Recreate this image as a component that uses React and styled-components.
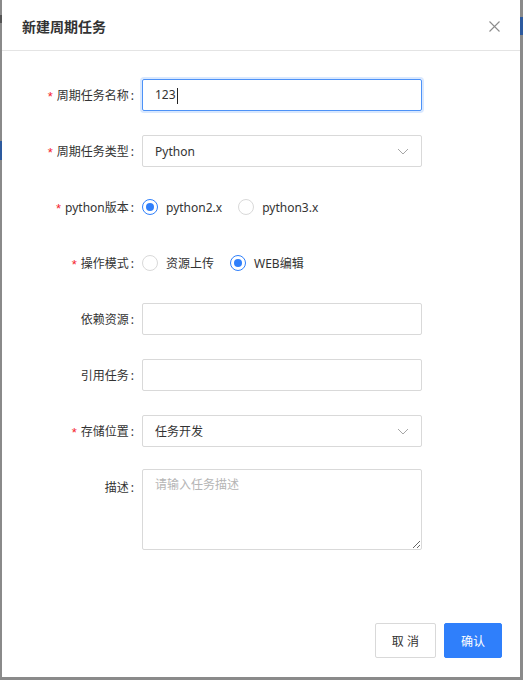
import React from "react";
import styled, { createGlobalStyle } from "styled-components";

const GlobalStyle = createGlobalStyle`
  html, body {
    margin: 0;
    padding: 0;
  }
  body {
    font-family: "Noto Sans", "Noto Sans CJK SC", sans-serif;
    font-size: 12px;
    color: #333;
  }
`;

const blue = "#2f7ffb";

const Backdrop = styled.div`
  width: 523px;
  height: 680px;
  padding-left: 2px;
  box-sizing: border-box;
  background:
    linear-gradient(#2d5a9e, #2d5a9e) 0 141px / 2px 19px no-repeat,
    linear-gradient(#555, #555) 0 15px / 2px 8px no-repeat,
    linear-gradient(#2d5a9e, #2d5a9e) 520px 17px / 3px 18px no-repeat,
    #8a8a8a;
`;

const Modal = styled.div`
  width: 518px;
  height: 677px;
  background: #fff;
  display: flex;
  flex-direction: column;
`;

const Header = styled.div`
  height: 51px;
  display: flex;
  align-items: center;
  justify-content: space-between;
  padding: 2px 18px 0 20px;
  box-sizing: border-box;
  border-bottom: 1px solid #e4e4e4;
`;

const Title = styled.h2`
  margin: 0;
  font-size: 14px;
  font-weight: bold;
  color: #333;
`;

const Close = styled.button`
  border: none;
  background: none;
  padding: 0;
  width: 16px;
  height: 16px;
  display: flex;
  align-items: center;
  justify-content: center;
  cursor: pointer;
`;

const Form = styled.div`
  padding-top: 28px;
  display: flex;
  flex-direction: column;
  gap: 24px;
`;

const Row = styled.div`
  display: flex;
  align-items: ${(p) => (p.$top ? "flex-start" : "center")};
  min-height: 32px;
`;

const Label = styled.label`
  width: 140px;
  flex-shrink: 0;
  display: flex;
  justify-content: flex-end;
  align-items: center;
  height: 32px;
  font-size: 12px;
  color: #333;
  white-space: nowrap;
`;

const Star = styled.span`
  color: #f5222d;
  margin-right: 4px;
  font-family: "Liberation Sans", sans-serif;
  font-size: 13px;
  line-height: 1;
  position: relative;
  top: 1px;
`;

const Colon = styled.span`
  margin: 0 8px 0 2px;
`;

const Field = styled.div`
  width: 280px;
  height: 32px;
  box-sizing: border-box;
  border: 1px solid ${(p) => (p.$focus ? "#4d92f7" : "#d9d9d9")};
  box-shadow: ${(p) => (p.$focus ? "0 0 0 2px rgba(47,127,251,0.18)" : "none")};
  border-radius: 2px;
  padding: 0 12px;
  display: flex;
  align-items: center;
  justify-content: space-between;
  font-size: 12px;
  color: #333;
`;

const TextInput = styled.input`
  width: 280px;
  height: 32px;
  box-sizing: border-box;
  border: 1px solid #d9d9d9;
  border-radius: 2px;
  padding: 0 12px;
  font: inherit;
  outline: none;
`;

const Caret = styled.span`
  display: inline-block;
  width: 1px;
  height: 16px;
  background: #222;
  vertical-align: middle;
  margin-left: 1px;
`;

const TextArea = styled.textarea`
  width: 280px;
  height: 81px;
  box-sizing: border-box;
  border: 1px solid #d9d9d9;
  border-radius: 2px;
  padding: 6px 12px;
  font: inherit;
  line-height: 1.5;
  color: #333;
  margin-top: -2px;
  outline: none;
  &::placeholder {
    color: #b5b5b5;
  }
`;

const RadioGroup = styled.div`
  display: flex;
  align-items: center;
`;

const RadioItem = styled.label`
  display: flex;
  align-items: center;
  margin-right: 8px;
  font-size: 12px;
  color: #333;
  cursor: pointer;
`;

const Dot = styled.span`
  width: 16px;
  height: 16px;
  box-sizing: border-box;
  border-radius: 50%;
  border: 1px solid ${(p) => (p.$on ? blue : "#d9d9d9")};
  display: flex;
  align-items: center;
  justify-content: center;
  &::after {
    content: "";
    width: 8px;
    height: 8px;
    border-radius: 50%;
    background: ${blue};
    display: ${(p) => (p.$on ? "block" : "none")};
  }
`;

const RadioText = styled.span`
  padding: 0 8px;
`;

const Footer = styled.div`
  margin-top: auto;
  display: flex;
  justify-content: flex-end;
  gap: 8px;
  padding: 0 18px 19px 0;
`;

const Button = styled.button`
  height: 35px;
  padding: 0 16px;
  border-radius: 2px;
  font-family: inherit;
  font-size: 12px;
  cursor: pointer;
  border: 1px solid ${(p) => (p.$primary ? blue : "#d9d9d9")};
  background: ${(p) => (p.$primary ? blue : "#fff")};
  color: ${(p) => (p.$primary ? "#fff" : "#333")};
`;

const Chevron = () => (
  <svg width="12" height="7" viewBox="0 0 12 7">
    <path d="M1 1l5 5 5-5" fill="none" stroke="#a6a6a6" strokeWidth="1" />
  </svg>
);

const FormLabel = ({ required, children }) => (
  <Label>
    {required && <Star>*</Star>}
    {children}
    <Colon>:</Colon>
  </Label>
);

const Radio = ({ on, children }) => (
  <RadioItem>
    <Dot $on={on} />
    <RadioText>{children}</RadioText>
  </RadioItem>
);

export default function App() {
  return (
    <Backdrop>
      <GlobalStyle />
      <Modal>
        <Header>
          <Title>新建周期任务</Title>
          <Close aria-label="close">
            <svg width="11" height="11" viewBox="0 0 11 11">
              <path d="M0.5 0.5l10 10M10.5 0.5l-10 10" stroke="#8c8c8c" strokeWidth="1.1" />
            </svg>
          </Close>
        </Header>
        <Form>
          <Row>
            <FormLabel required>周期任务名称</FormLabel>
            <Field $focus>
              <span>
                123
                <Caret />
              </span>
            </Field>
          </Row>
          <Row>
            <FormLabel required>周期任务类型</FormLabel>
            <Field>
              <span>Python</span>
              <Chevron />
            </Field>
          </Row>
          <Row>
            <FormLabel required>python版本</FormLabel>
            <RadioGroup>
              <Radio on>python2.x</Radio>
              <Radio>python3.x</Radio>
            </RadioGroup>
          </Row>
          <Row>
            <FormLabel required>操作模式</FormLabel>
            <RadioGroup>
              <Radio>资源上传</Radio>
              <Radio on>WEB编辑</Radio>
            </RadioGroup>
          </Row>
          <Row>
            <FormLabel>依赖资源</FormLabel>
            <TextInput />
          </Row>
          <Row>
            <FormLabel>引用任务</FormLabel>
            <TextInput />
          </Row>
          <Row>
            <FormLabel required>存储位置</FormLabel>
            <Field>
              <span>任务开发</span>
              <Chevron />
            </Field>
          </Row>
          <Row $top>
            <FormLabel>描述</FormLabel>
            <TextArea placeholder="请输入任务描述" />
          </Row>
        </Form>
        <Footer>
          <Button>取 消</Button>
          <Button $primary>确认</Button>
        </Footer>
      </Modal>
    </Backdrop>
  );
}
